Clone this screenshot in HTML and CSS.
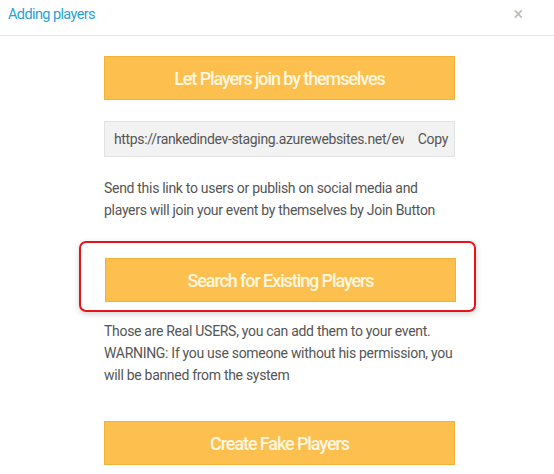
FILE: index.html
```html
<!DOCTYPE html>
<html>
<head>
<meta charset="utf-8">
<title>Adding players</title>
<link rel="stylesheet" href="styles.css">
</head>
<body>
<div class="modal">
  <div class="modal-header">
    <span class="modal-title">Adding players</span>
    <span class="close">&times;</span>
  </div>
  <div class="modal-body">
    <button class="btn-yellow">Let Players join by themselves</button>
    <div class="link-box">
      <input class="link-input" type="text" value="https://rankedindev-staging.azurewebsites.net/event/join" readonly>
      <span class="copy">Copy</span>
    </div>
    <p class="note">Send this link to users or publish on social media and players will join your event by themselves by Join Button</p>
    <div class="highlight">
      <button class="btn-yellow">Search for Existing Players</button>
    </div>
    <p class="note note-after">Those are Real USERS, you can add them to your event. WARNING: If you use someone without his permission, you will be banned from the system</p>
    <button class="btn-yellow btn-last">Create Fake Players</button>
  </div>
</div>
</body>
</html>
```
FILE: styles.css
```css
html, body {margin:0; padding:0; background:#fff;}
body {font-family:Roboto, "Liberation Sans", sans-serif; color:#555; width:554px; height:474px; overflow:hidden;}
.modal-header {height:36px; border-bottom:1px solid #e5e5e5; display:flex; align-items:center; justify-content:space-between; padding:0 31px 0 8px; box-sizing:border-box;}
.modal-title {color:#2a9fd6; font-size:14.5px; letter-spacing:-0.6px; margin-top:-6px;}
.close {color:#bbb; font-size:18px; margin-top:-8px;}
.modal-body {padding:20px 0 0 104px; width:351px;}
.btn-yellow {display:block; width:351px; height:44px; background:#fdc04e; border:1px solid #f3b13a; color:#fff7e0; font-family:Roboto, sans-serif; font-weight:500; font-size:18px; letter-spacing:-1.1px; padding:0; margin:0;}
.link-box {display:flex; align-items:center; margin-top:21px; height:36px; background:#f2f2f2; border:1px solid #e2e2e2; box-sizing:border-box;}
.link-input {flex:1; min-width:0; border:0; background:transparent; font-family:Roboto, sans-serif; font-size:14px; color:#555; padding:0 0 0 9px; height:34px; letter-spacing:-0.35px;}
.copy {font-size:14px; color:#555; padding:0 6px 0 14px; letter-spacing:-0.3px;}
.note {font-size:14px; line-height:22px; margin:20px 0 0 0; letter-spacing:-0.3px;}
.highlight {margin:20px 0 0 -25px; width:397px; box-sizing:border-box; padding:15px 0 8px 24px; border:2px solid #e8121a; border-radius:7px; box-shadow:0 2px 6px rgba(0,0,0,0.18);}
.note-after {margin-top:8px;}
.btn-last {margin-top:35px;}
```
